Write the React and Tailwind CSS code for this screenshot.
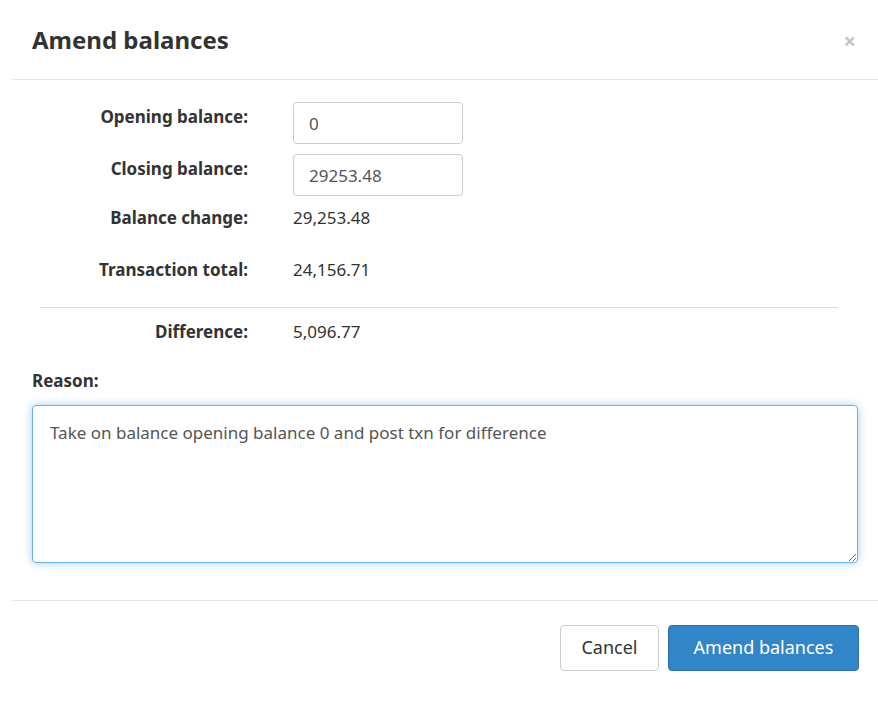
export default function App() {
  const rowLabel = "w-[216px] text-right font-bold text-[17px] text-[#333]";
  return (
    <div className="w-[878px] h-[708px] bg-white text-[#333] font-[family-name:'Liberation_Sans',Arial,sans-serif] relative overflow-hidden">
      <div className="flex items-center justify-between pl-[32px] pr-[22px] h-[79px]">
        <h1 className="text-[24px] font-bold text-[#333]">Amend balances</h1>
        <span className="text-[22px] text-[#c4c4c4] font-bold leading-none">×</span>
      </div>
      <div className="ml-[12px] border-t border-[#e5e5e5]" />
      <div className="px-[32px] pt-[22px]">
        <div className="flex items-center h-[42px]">
          <div className={rowLabel + " self-start pt-[2px]"}>Opening balance:</div>
          <input readOnly value="0" className="ml-[45px] w-[170px] h-[42px] border border-[#ccc] rounded-[4px] px-[15px] text-[17px] text-[#555] outline-none" />
        </div>
        <div className="flex items-center h-[42px] mt-[10px]">
          <div className={rowLabel + " self-start pt-[2px]"}>Closing balance:</div>
          <input readOnly value="29253.48" className="ml-[45px] w-[170px] h-[42px] border border-[#ccc] rounded-[4px] px-[15px] text-[17px] text-[#555] outline-none" />
        </div>
        <div className="flex items-center h-[28px] mt-[8px]">
          <div className={rowLabel}>Balance change:</div>
          <div className="ml-[45px] text-[17px]">29,253.48</div>
        </div>
        <div className="flex items-center h-[28px] mt-[24px]">
          <div className={rowLabel}>Transaction total:</div>
          <div className="ml-[45px] text-[17px]">24,156.71</div>
        </div>
        <div className="mx-[8px] mt-[23px] border-t border-[#ddd]" />
        <div className="flex items-center h-[28px] mt-[10px]">
          <div className={rowLabel}>Difference:</div>
          <div className="ml-[45px] text-[17px]">5,096.77</div>
        </div>
        <div className="mt-[22px] font-bold text-[17px]">Reason:</div>
        <textarea
          readOnly
          value="Take on balance opening balance 0 and post txn for difference"
          className="mt-[11px] block w-[826px] h-[158px] border border-[#66afe9] rounded-[4px] px-[17px] py-[14px] text-[17px] text-[#555] outline-none shadow-[0_0_8px_rgba(102,175,233,0.6)] resize-y"
        />
      </div>
      <div className="ml-[12px] mt-[37px] border-t border-[#e5e5e5]" />
      <div className="flex justify-end gap-[9px] pr-[19px] pt-[24px]">
        <button className="w-[99px] h-[46px] border border-[#ccc] rounded-[4px] bg-white text-[18px] text-[#333]">Cancel</button>
        <button className="w-[191px] h-[46px] border border-[#2e6da4] rounded-[4px] bg-[#3286c8] text-[18px] text-white">Amend balances</button>
      </div>
    </div>
  );
}
